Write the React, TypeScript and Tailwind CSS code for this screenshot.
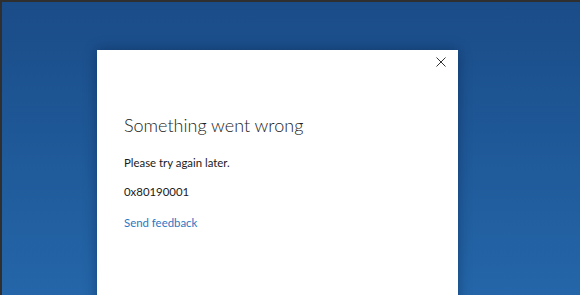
import React from 'react';

const CloseIcon: React.FC = () => (
    <svg width="10" height="10" viewBox="0 0 10 10" fill="none" stroke="#333" strokeWidth={1}>
        <path d="M0.5 0.5L9.5 9.5M9.5 0.5L0.5 9.5" />
    </svg>
);

export default function App() {
    return (
        <div
            className="h-[295px] w-[580px] overflow-hidden border-t-2 border-l-2 border-[#2f2f2f] bg-gradient-to-b from-[#1a4c88] to-[#2466a9]"
            style={{ fontFamily: 'Lato, "Open Sans", sans-serif' }}
        >
            <div className="ml-[95px] mt-[48px] h-[260px] w-[361px] bg-white shadow-[0_0_12px_rgba(0,20,50,0.4)] flex flex-col">
                <div className="flex justify-end pt-[7px] pr-[12px]">
                    <button className="w-[10px] h-[10px] flex items-center justify-center" aria-label="Close">
                        <CloseIcon />
                    </button>
                </div>
                <div className="pl-[27px] pt-[45px]">
                    <h1 className="text-[18px] leading-[26px] text-[#222] font-light">Something went wrong</h1>
                    <p className="mt-[16px] text-[11.4px] leading-[18px] text-[#1a1a1a]">Please try again later.</p>
                    <p className="mt-[11px] text-[11.4px] leading-[18px] text-[#1a1a1a]">0x80190001</p>
                    <a href="#" className="block mt-[13px] text-[11.4px] leading-[18px] text-[#2a78c4]">Send feedback</a>
                </div>
            </div>
        </div>
    );
}
